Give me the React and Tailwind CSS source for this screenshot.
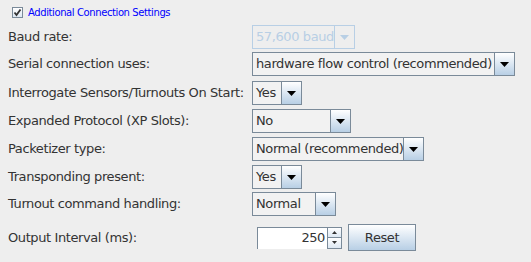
import React from "react";

const FONT = { fontFamily: '"DejaVu Sans", sans-serif' };

const Arrow = () => (
  <div className="w-[20px] shrink-0 h-full flex items-center justify-center border-l border-[#7a8a99] bg-gradient-to-b from-white to-[#b8cfe5]">
    <svg width="9" height="5" viewBox="0 0 9 5">
      <polygon points="0,0 9,0 4.5,5" fill="#000" />
    </svg>
  </div>
);

const Combo = ({ value, width, disabled }) => (
  <div
    className={`flex shrink-0 h-[24px] border ${disabled ? "border-[#b8cfe5]" : "border-[#7a8a99]"}`}
    style={{ width }}
  >
    <div className={`flex-1 flex items-center pl-[3px] whitespace-nowrap overflow-hidden text-[13px] tracking-[-0.4px] ${disabled ? "text-[#b8cfe5] bg-[#eeeeee]" : "text-[#333333] bg-[#f2f2f2]"}`}>
      {value}
    </div>
    {disabled ? (
      <div className="w-[20px] shrink-0 h-full flex items-center justify-center border-l border-[#b8cfe5] bg-[#eeeeee]">
        <svg width="9" height="5" viewBox="0 0 9 5">
          <polygon points="0,0 9,0 4.5,5" fill="#b8cfe5" />
        </svg>
      </div>
    ) : (
      <Arrow />
    )}
  </div>
);

const Row = ({ label, children, className }) => (
  <div className={`flex items-center ${className}`}>
    <div className="w-[252px] shrink-0 pl-[8px] text-[13px] tracking-[-0.4px] text-[#333333] whitespace-nowrap">{label}</div>
    {children}
  </div>
);

const App = () => {
  return (
    <div className="w-[531px] h-[262px] bg-[#eeeeee] overflow-hidden" style={FONT}>
      <div className="flex items-center h-[11px] mt-[7px] pl-[12px]">
        <div className="w-[11px] h-[11px] border border-[#7a8a99] bg-gradient-to-b from-white to-[#dde8f3] flex items-center justify-center">
          <svg width="9" height="9" viewBox="0 0 9 9">
            <polyline points="1.5,4.5 3.5,7 7.5,1.5" fill="none" stroke="#333" strokeWidth="1.8" />
          </svg>
        </div>
        <span className="ml-[5px] text-[10px] tracking-[-0.4px] text-[#0000ff] whitespace-nowrap">Additional Connection Settings</span>
      </div>

      <Row label="Baud rate:" className="mt-[7px] h-[24px]">
        <Combo value="57,600 baud" width={103} disabled />
      </Row>
      <Row label="Serial connection uses:" className="mt-[3px] h-[24px]">
        <Combo value="hardware flow control (recommended)" width={263} />
      </Row>
      <Row label="Interrogate Sensors/Turnouts On Start:" className="mt-[5px] h-[24px]">
        <Combo value="Yes" width={50} />
      </Row>
      <Row label="Expanded Protocol (XP Slots):" className="mt-[4px] h-[24px]">
        <Combo value="No" width={99} />
      </Row>
      <Row label="Packetizer type:" className="mt-[4px] h-[24px]">
        <Combo value="Normal (recommended)" width={172} />
      </Row>
      <Row label="Transponding present:" className="mt-[4px] h-[24px]">
        <Combo value="Yes" width={50} />
      </Row>
      <Row label="Turnout command handling:" className="mt-[3px] h-[24px]">
        <Combo value="Normal" width={84} />
      </Row>
      <Row label="Output Interval (ms):" className="mt-[8px] h-[27px]">
        <div className="flex items-center ml-[5px]">
          <div className="flex h-[22px]">
            <div className="w-[70px] bg-white border-t border-l border-[#7a8a99] flex items-center justify-end pr-[2px] text-[13px] tracking-[-0.4px] text-[#333333]">
              250
            </div>
            <div className="w-[15px] flex flex-col border border-[#7a8a99]">
              <div className="flex-1 flex items-center justify-center bg-gradient-to-b from-white to-[#dde8f3] border-b border-[#7a8a99]">
                <svg width="5" height="3" viewBox="0 0 5 3"><polygon points="2.5,0 5,3 0,3" fill="#333" /></svg>
              </div>
              <div className="flex-1 flex items-center justify-center bg-gradient-to-b from-white to-[#dde8f3]">
                <svg width="5" height="3" viewBox="0 0 5 3"><polygon points="0,0 5,0 2.5,3" fill="#333" /></svg>
              </div>
            </div>
          </div>
          <button className="ml-[6px] w-[68px] h-[27px] border border-[#7a8a99] bg-gradient-to-b from-white to-[#b8cfe5] text-[13px] tracking-[-0.4px] text-[#333333]">
            Reset
          </button>
        </div>
      </Row>
    </div>
  );
};

export default App;
